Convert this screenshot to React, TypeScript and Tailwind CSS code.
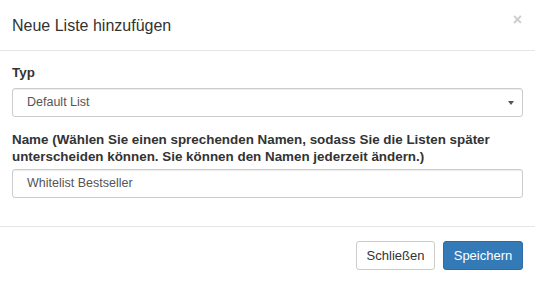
export default function App() {
  return (
    <div className="w-[535px] h-[283px] bg-white text-[#333] font-['Liberation_Sans',Arial,sans-serif] overflow-hidden">
      <div className="relative h-[51px] border-b border-[#e5e5e5] px-3 flex items-center">
        <h4 className="text-[16px] leading-none mt-[2px] text-[#333]">Neue Liste hinzufügen</h4>
        <button className="absolute right-[13px] top-[12px] text-[16px] font-bold text-[#cdcdcd] leading-none">×</button>
      </div>

      <div className="px-3 pt-[13px] h-[176px] border-b border-[#e5e5e5]">
        <label className="block text-[13.4px] font-bold leading-[18px] mb-[6px]">Typ</label>
        <div className="relative h-[29px] border border-[#ccc] rounded-[3px] flex items-center pl-[14px] text-[12.5px] text-[#555] shadow-[inset_0_1px_1px_rgba(0,0,0,0.075)]">
          Default List
          <span className="absolute right-[8px] top-[12px] w-0 h-0 border-l-[3px] border-r-[3px] border-t-[4px] border-l-transparent border-r-transparent border-t-[#555]" />
        </div>

        <label className="block text-[13.4px] font-bold leading-[17px] mt-[14px] mb-[4px]">
          Name (Wählen Sie einen sprechenden Namen, sodass Sie die Listen später
          <br />
          unterscheiden können. Sie können den Namen jederzeit ändern.)
        </label>
        <div className="h-[29px] border border-[#ccc] rounded-[3px] flex items-center pl-[14px] text-[12.5px] text-[#555] shadow-[inset_0_1px_1px_rgba(0,0,0,0.075)]">
          Whitelist Bestseller
        </div>
      </div>

      <div className="flex justify-end gap-[8px] px-3 pt-[14px]">
        <button className="h-[29px] w-[79px] border border-[#ccc] rounded-[3px] bg-white text-[13px] text-[#333]">
          Schließen
        </button>
        <button className="h-[29px] w-[80px] border border-[#2e6da4] rounded-[3px] bg-[#337ab7] text-[13px] text-white">
          Speichern
        </button>
      </div>
    </div>
  )
}
